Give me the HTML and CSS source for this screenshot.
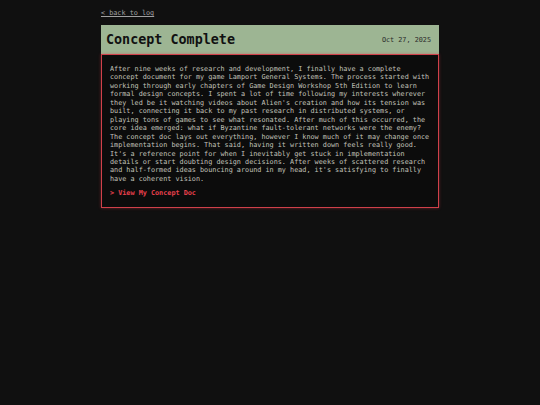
FILE: index.html
```html
<!DOCTYPE html>
<html>
<head>
<meta charset="utf-8">
<link rel="stylesheet" href="styles.css">
</head>
<body>
<main class="page">
  <a class="back" href="#">&lt; back to log</a>
  <article class="entry">
    <header class="entry-head">
      <h1 class="entry-title">Concept Complete</h1>
      <span class="entry-date">Oct 27, 2025</span>
    </header>
    <div class="entry-body">
      <p class="entry-text">After nine weeks of research and development, I finally have a complete concept document for my game Lamport General Systems. The process started with working through early chapters of Game Design Workshop 5th Edition to learn formal design concepts. I spent a lot of time following my interests wherever they led be it watching videos about Alien's creation and how its tension was built, connecting it back to my past research in distributed systems, or playing tons of games to see what resonated. After much of this occurred, the core idea emerged: what if Byzantine fault-tolerant networks were the enemy? The concept doc lays out everything, however I know much of it may change once implementation begins. That said, having it written down feels really good. It's a reference point for when I inevitably get stuck in implementation details or start doubting design decisions. After weeks of scattered research and half-formed ideas bouncing around in my head, it's satisfying to finally have a coherent vision.</p>
      <a class="doc-link" href="#">&gt; View My Concept Doc</a>
    </div>
  </article>
</main>
</body>
</html>
```
FILE: styles.css
```css
html, body {
  margin: 0;
  padding: 0;
  background: #101010;
}
body {
  font-family: "DejaVu Sans Mono", "Liberation Mono", monospace;
  color: #c4c4bc;
  min-height: 405px;
}
.page {
  width: 338px;
  margin: 0 auto;
  padding-top: 8px;
  display: flex;
  flex-direction: column;
}
.back {
  font-size: 6.8px;
  line-height: 10px;
  color: #a0a0a0;
  text-decoration: underline;
  align-self: flex-start;
  margin-bottom: 7px;
}
.entry {
  display: flex;
  flex-direction: column;
}
.entry-head {
  background: #9db593;
  height: 29px;
  display: flex;
  align-items: center;
  justify-content: space-between;
  padding: 0 8px 0 5px;
  box-sizing: border-box;
}
.entry-title {
  margin: 0;
  font-size: 13.4px;
  font-weight: bold;
  color: #111;
  line-height: 1;
}
.entry-date {
  font-size: 6.8px;
  color: #2a2a2a;
}
.entry-body {
  border: 1px solid #d0404a;
  box-shadow: 0 0 3px rgba(210, 60, 70, 0.45);
  background: #0c0c0c;
  padding: 10px 8px 9px 8px;
  display: flex;
  flex-direction: column;
  align-items: stretch;
}
.entry-text {
  margin: 0;
  font-size: 6.8px;
  line-height: 8.45px;
  color: #c2c2ba;
}
.doc-link {
  align-self: flex-start;
  margin-top: 6px;
  font-size: 6.8px;
  line-height: 8.45px;
  font-weight: bold;
  color: #e8404c;
  text-decoration: none;
}
```
